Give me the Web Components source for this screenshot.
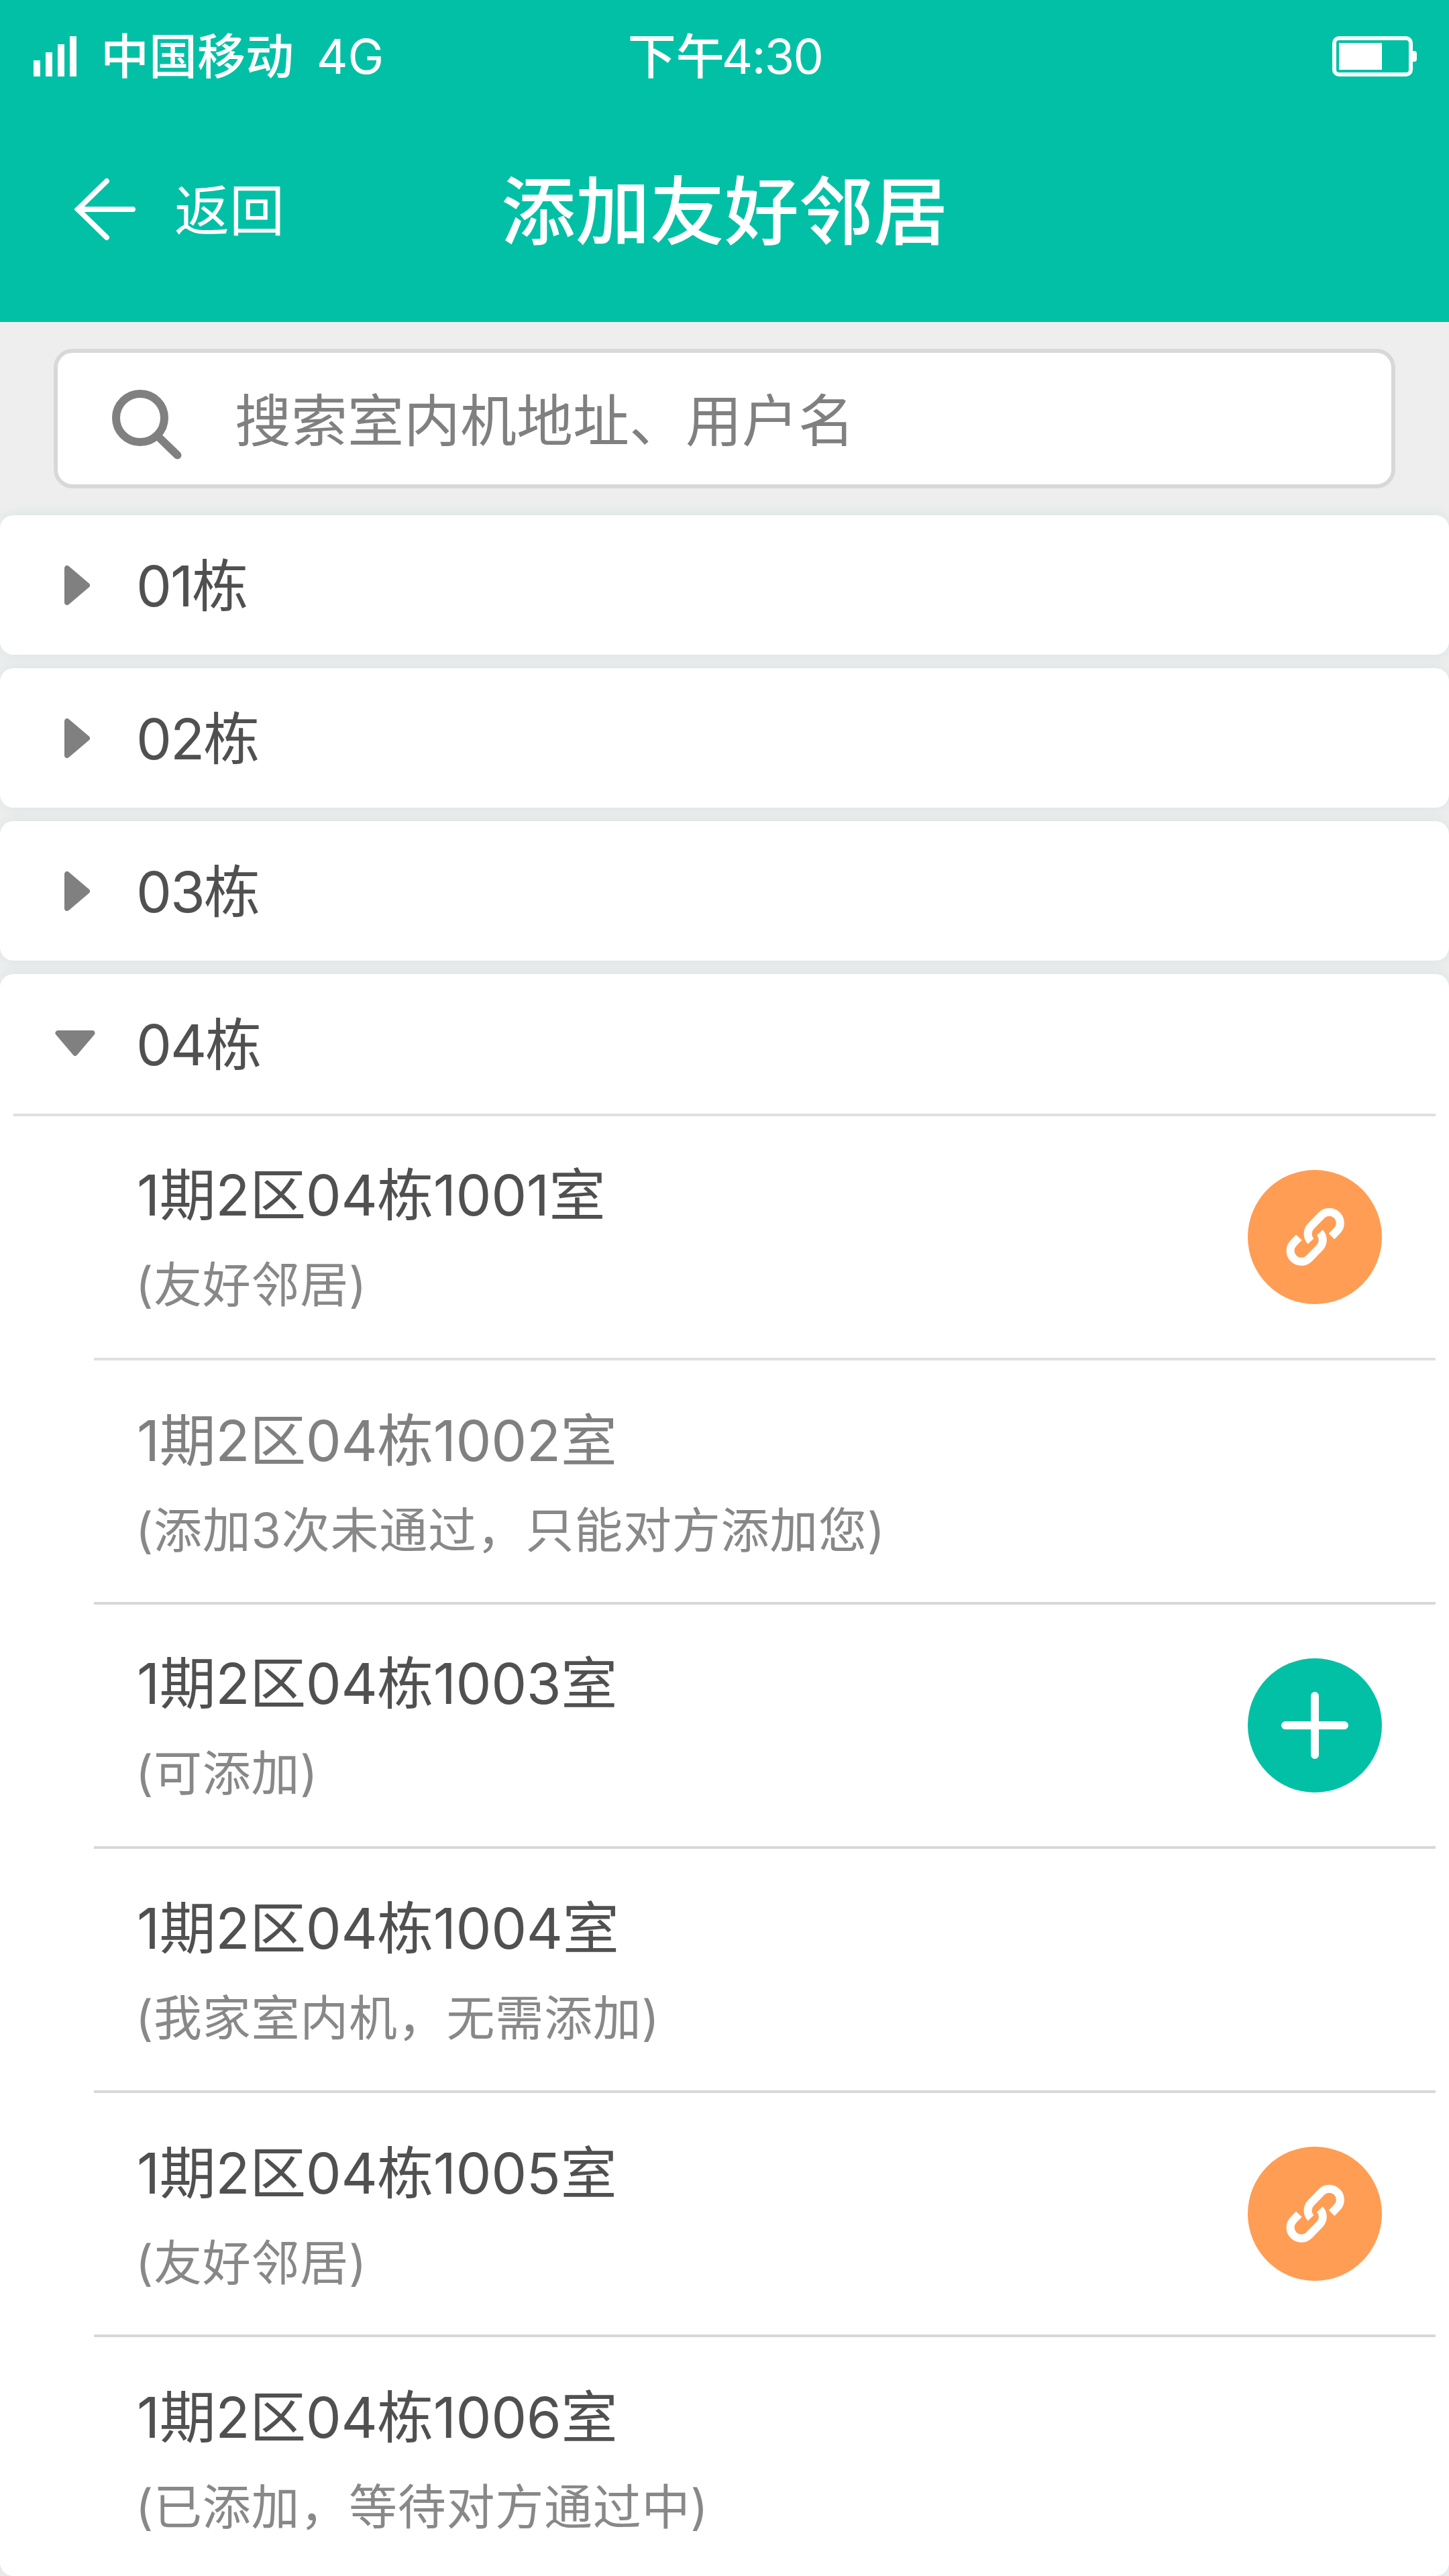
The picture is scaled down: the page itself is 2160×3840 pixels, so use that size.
<!DOCTYPE html>
<html lang="zh-CN">
<head>
<meta charset="utf-8">
<title>添加友好邻居</title>
<style>
html,body{margin:0;padding:0}
body{width:2160px;height:3840px;overflow:hidden;background:#eee;font-family:Inter,"Noto Sans CJK SC",sans-serif;color:#505050}
</style>
</head>
<body>
<neighbor-app></neighbor-app>
<script>
const define = (name, html) => {
  const tpl = document.createElement('template');
  tpl.innerHTML = html;
  customElements.define(name, class extends HTMLElement {
    constructor() {
      super();
      this.attachShadow({ mode: 'open' }).append(tpl.content.cloneNode(true));
    }
  });
};

define('status-bar', `
<style>
:host{display:grid;grid-template-columns:1fr auto 1fr;align-items:center;height:168px;padding:0 48px 0 50px;color:#fff;font-size:72px;line-height:104px}
svg{display:block}
.left{display:flex;align-items:center}
.signal{margin-right:36px}
.carrier,.time{font-weight:500}
.net{margin-left:34px}
.clock{font-weight:400;margin-left:-4px;letter-spacing:-1.7px}
.right{display:flex;justify-content:flex-end}
</style>
<div class="left">
  <svg class="signal" width="64" height="60" viewBox="0 0 64 60" fill="#fff"><path d="M0 36h10v24H0zM18 24h10v36H18zM36 12h10v48H36zM54 0h10v60H54z"/></svg>
  <span class="carrier">中国移动</span><span class="net">4G</span>
</div>
<span class="time">下午<span class="clock">4:30</span></span>
<div class="right">
  <svg width="126" height="60" viewBox="0 0 126 60"><rect x="3" y="3" width="114" height="54" rx="7" fill="none" stroke="#fff" stroke-width="6"/><path d="M10 10h64v40H10z" fill="#fff"/><path d="M120 22h2a4 4 0 0 1 4 4v8a4 4 0 0 1-4 4h-2z" fill="#fff"/></svg>
</div>`);

define('nav-bar', `
<style>
:host{display:grid;grid-template-columns:1fr auto 1fr;align-items:center;height:312px;box-sizing:border-box;padding:0 110px 24px;color:#fff}
.back{display:flex;align-items:center;font-size:82px;line-height:120px;gap:56px}
.label{padding-top:6px}
svg{display:block}
h1{margin:0;padding-top:7px;font-size:111px;line-height:160px;font-weight:500}
</style>
<div class="back">
  <svg width="94" height="94" viewBox="0 0 94 94" fill="none" stroke="#fff" stroke-width="8" stroke-linecap="round"><path d="M49 5L6 47l43 42M6 47h82"/></svg>
  <span class="label"><slot name="back"></slot></span>
</div>
<h1><slot></slot></h1>`);

define('search-box', `
<style>
:host{display:flex;align-items:center;box-sizing:border-box;height:208px;margin:40px 80px;padding-left:81px;border:6px solid #d8d8d8;border-radius:28px;background:#fff;color:#808080;font-size:84px;line-height:120px}
svg{display:block;margin:18px 79px 0 0}
.hint{padding-top:7px}
</style>
<svg width="104" height="104" viewBox="0 0 104 104" fill="none" stroke="#808080" stroke-width="12" stroke-linecap="round"><circle cx="42" cy="42" r="36"/><path d="M68 69l29.500 28.500"/></svg>
<span class="hint"><slot></slot></span>`);

define('building-card', `
<style>
:host{display:block;background:#fff;border-radius:20px;box-shadow:0 0 20px rgba(0,138,138,.1)}
header{display:flex;align-items:center;height:208px;font-size:84px;line-height:120px}
.mark{display:flex;width:203px}
.name{padding-top:3px;letter-spacing:-2px}
svg{display:none}
.shut{display:block;margin-left:96px}
.open{display:none;margin-left:82px}
:host([open]) .shut{display:none}
:host([open]) .open{display:block}
.rule{display:none;height:4px;margin:0 20px;background:#e0e0e0}
:host([open]) .rule{display:block}
</style>
<header>
  <span class="mark">
    <svg class="shut" width="38" height="59" viewBox="0 0 38 59" fill="#808080" stroke="#808080" stroke-width="8" stroke-linejoin="round"><path d="M4 4v51l30-25.500z"/></svg>
    <svg class="open" width="60" height="40" viewBox="0 0 60 40" fill="#808080" stroke="#808080" stroke-width="8" stroke-linejoin="round"><path d="M4.500 4h51L30 34z"/></svg>
  </span>
  <span class="name"><slot name="name"></slot></span>
</header>
<div class="rule"></div>
<slot></slot>`);

define('room-row', `
<style>
:host{display:block;color:#505050}
:host([muted]){color:#808080}
.row{display:flex;align-items:center;justify-content:space-between;height:360px;padding:0 100px 0 204px}
.text{align-self:flex-start;padding-top:calc(57.5px + var(--drop,0px))}
.name{font-size:84px;line-height:120px;letter-spacing:-.4px}
.note{font-size:72px;line-height:104px;color:#888;margin:21px 0 0 -2px;letter-spacing:.75px}
.rule{height:4px;margin:0 20px 0 140px;background:var(--rule,#d8d8d8)}
:host([last]) .row{height:356px}
:host([last]) .rule{display:none}
</style>
<div class="row"><div class="text"><div class="name"><slot></slot></div><div class="note"><slot name="note"></slot></div></div><slot name="action"></slot></div>
<div class="rule"></div>`);

define('link-button', `
<style>
:host{display:block;width:200px;height:200px;border-radius:50%;background:#ff9d54}
svg{display:block}
</style>
<svg width="200" height="200" viewBox="0 0 200 200" fill="none" stroke="#fff" stroke-width="12">
  <path d="M125 99l8.200-8.500A16.300 16.300 0 0 0 110.100 67.500L94.500 83.500A16.300 16.300 0 0 0 94 106.300"/>
  <path transform="rotate(180 100.670 99.830)" d="M125 99l8.200-8.500A16.300 16.300 0 0 0 110.100 67.500L94.500 83.500A16.300 16.300 0 0 0 94 106.300"/>
</svg>`);

define('add-button', `
<style>
:host{display:block;width:200px;height:200px;border-radius:50%;background:#02c0a5}
svg{display:block}
</style>
<svg width="200" height="200" viewBox="0 0 200 200" stroke="#fff" stroke-width="12" stroke-linecap="round"><path d="M100 56v88M56 100h88"/></svg>`);

define('neighbor-app', `
<style>
:host{display:block}
.top{background:#02c0a5}
.list{display:flex;flex-direction:column;gap:20px}
.first{--rule:#e0e0e0}
.low1{--drop:1px}
.low2{--drop:2px}
</style>
<div class="top">
  <status-bar></status-bar>
  <nav-bar><span slot="back">返回</span>添加友好邻居</nav-bar>
</div>
<search-box>搜索室内机地址、用户名</search-box>
<div class="list">
  <building-card><span slot="name">01栋</span></building-card>
  <building-card><span slot="name">02栋</span></building-card>
  <building-card><span slot="name">03栋</span></building-card>
  <building-card open><span slot="name">04栋</span>
    <room-row class="first">1期2区04栋1001室<span slot="note">(友好邻居)</span><link-button slot="action"></link-button></room-row>
    <room-row class="low2" muted>1期2区04栋1002室<span slot="note">(添加3次未通过，只能对方添加您)</span></room-row>
    <room-row>1期2区04栋1003室<span slot="note">(可添加)</span><add-button slot="action"></add-button></room-row>
    <room-row class="low1">1期2区04栋1004室<span slot="note">(我家室内机，无需添加)</span></room-row>
    <room-row class="low2">1期2区04栋1005室<span slot="note">(友好邻居)</span><link-button slot="action"></link-button></room-row>
    <room-row class="low2" last>1期2区04栋1006室<span slot="note">(已添加，等待对方通过中)</span></room-row>
  </building-card>
</div>`);
</script>
</body>
</html>
